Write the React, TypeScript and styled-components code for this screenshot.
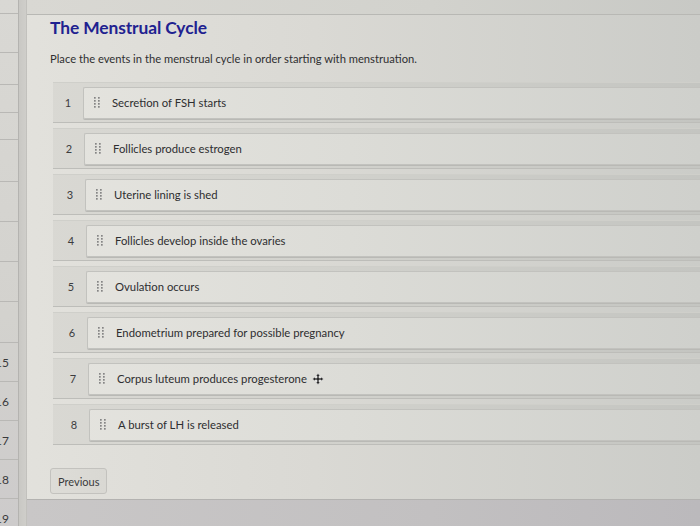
import React from "react";
import styled, { createGlobalStyle } from "styled-components";

const Global = createGlobalStyle`
  html, body { margin: 0; padding: 0; }
  body {
    width: 700px;
    height: 526px;
    overflow: hidden;
    font-family: Lato, "Open Sans", Arial, sans-serif;
    background: #cfcfcb;
  }
`;

const Page = styled.div`
  display: flex;
  width: 700px;
  height: 526px;
  overflow: hidden;
`;

const Sidebar = styled.div`
  width: 18px;
  flex: none;
  display: flex;
  flex-direction: column;
  background: linear-gradient(180deg, #d9d8d4 0%, #d3d2ce 60%, #cdcbcb 100%);
`;

const SideCell = styled.div<{ $h: number }>`
  height: ${(p) => p.$h}px;
  flex: none;
  border-bottom: 1px solid #b9b8b5;
  box-sizing: border-box;
  display: flex;
  justify-content: flex-end;
  align-items: center;
  padding-right: 9px;
  font-size: 12px;
  color: #3a3a3c;
  white-space: nowrap;
`;

const Strip = styled.div`
  width: 7px;
  flex: none;
  background: linear-gradient(90deg, #c9c8c4, #cfceca);
  border-left: 1px solid #b4b3b0;
  border-right: 1px solid #c2c1bd;
`;

const Main = styled.div`
  flex: 1;
  display: flex;
  flex-direction: column;
  min-width: 0;
`;

const TopBar = styled.div`
  height: 14px;
  flex: none;
  background: linear-gradient(90deg, #d9d8d3, #d2d2cd 60%, #c8c9c5);
  border-bottom: 1px solid #b8b8b4;
`;

const Panel = styled.div`
  flex: 1;
  display: flex;
  flex-direction: column;
  padding: 2px 0 0 23px;
  background: linear-gradient(90deg, #e3e2dd 0%, #dad9d4 45%, #cbccc8 100%) fixed;
  border-bottom: 1px solid #b3b2b0;
`;

const BottomBar = styled.div`
  height: 26px;
  flex: none;
  background: linear-gradient(90deg, #c9c7c7, #c2c0c1 60%, #bbb9bc);
`;

const Title = styled.h1`
  margin: 0;
  font-size: 17.4px;
  line-height: 22px;
  font-weight: 700;
  color: #1f2290;
  letter-spacing: -0.1px;
`;

const Prompt = styled.p`
  margin: 13px 0 0 0;
  font-size: 11.2px;
  line-height: 14px;
  color: #2f2f31;
`;

const List = styled.ol`
  list-style: none;
  margin: 16px 0 0 0;
  padding: 0;
  display: flex;
  flex-direction: column;
  gap: 5px;
`;

const Band = styled.li<{ $shift: number }>`
  height: 41px;
  box-sizing: border-box;
  display: flex;
  align-items: center;
  margin-left: 3px;
  padding: 4px 0 4px ${(p) => p.$shift}px;
  background: linear-gradient(90deg, #dad9d4 0%, #d1d1cc 50%, #c4c5c1 100%) fixed;
  border-top: 1px solid #cfcfca;
  border-bottom: 1px solid #bdbdb9;
`;

const Num = styled.span`
  width: 30px;
  flex: none;
  text-align: center;
  font-size: 11px;
  color: #3c3c3e;
`;

const Card = styled.div`
  flex: 1;
  height: 32px;
  display: flex;
  align-items: center;
  gap: 12px;
  padding-left: 10px;
  box-sizing: border-box;
  background: linear-gradient(90deg, #e6e5e0 0%, #dcdcd7 50%, #cfd0cc 100%) fixed;
  border: 1px solid #c2c2be;
  border-right: none;
  border-radius: 2px 0 0 2px;
  box-shadow: 0 1px 0 #b9b9b5;
`;

const Label = styled.span`
  font-size: 11.3px;
  color: #2e2e30;
  white-space: nowrap;
  display: flex;
  align-items: center;
  gap: 5px;
`;

const Button = styled.button`
  align-self: flex-start;
  margin-top: 23px;
  height: 26px;
  padding: 0 7px;
  font-family: inherit;
  font-size: 11px;
  color: #3a3a3c;
  background: linear-gradient(90deg, #dddcd7, #d9d8d3);
  border: 1px solid #c3c2be;
  border-radius: 3px;
`;

const Handle = () => (
  <svg width="6" height="11" viewBox="0 0 6 11" style={{ flex: "none" }}>
    {[0, 1, 2, 3].map((r) =>
      [0, 1].map((c) => (
        <rect key={`${r}-${c}`} x={c * 4} y={r * 3} width="1.7" height="1.7" fill="#858585" />
      ))
    )}
  </svg>
);

const MoveCursor = () => (
  <svg width="12" height="12" viewBox="0 0 12 12">
    <path d="M6 0.5 L8.3 3 H7 V5 H9 V3.7 L11.5 6 L9 8.3 V7 H7 V9 H8.3 L6 11.5 L3.7 9 H5 V7 H3 V8.3 L0.5 6 L3 3.7 V5 H5 V3 H3.7 Z" fill="#2a2a2a" stroke="#eee" strokeWidth="0.6" />
  </svg>
);

const items = [
  "Secretion of FSH starts",
  "Follicles produce estrogen",
  "Uterine lining is shed",
  "Follicles develop inside the ovaries",
  "Ovulation occurs",
  "Endometrium prepared for possible pregnancy",
  "Corpus luteum produces progesterone",
  "A burst of LH is released",
];

const sideCells: { h: number; t: string }[] = [
  { h: 14, t: "" },
  { h: 39, t: "" },
  { h: 32, t: "" },
  { h: 28, t: "" },
  { h: 27, t: "" },
  { h: 42, t: "" },
  { h: 40, t: "" },
  { h: 40, t: "" },
  { h: 40, t: "" },
  { h: 41, t: "" },
  { h: 39, t: "15" },
  { h: 39, t: "16" },
  { h: 39, t: "17" },
  { h: 39, t: "18" },
  { h: 40, t: "19" },
];

export default function App() {
  return (
    <>
      <Global />
      <Page>
        <Sidebar>
          {sideCells.map((c, i) => (
            <SideCell key={i} $h={c.h}>
              {c.t}
            </SideCell>
          ))}
        </Sidebar>
        <Strip />
        <Main>
          <TopBar />
          <Panel>
            <Title>The Menstrual Cycle</Title>
            <Prompt>Place the events in the menstrual cycle in order starting with menstruation.</Prompt>
            <List>
              {items.map((text, i) => (
                <Band key={i} $shift={Math.round(i * 0.85)}>
                  <Num>{i + 1}</Num>
                  <Card>
                    <Handle />
                    <Label>
                      {text}
                      {i === 6 && <MoveCursor />}
                    </Label>
                  </Card>
                </Band>
              ))}
            </List>
            <Button>Previous</Button>
          </Panel>
          <BottomBar />
        </Main>
      </Page>
    </>
  );
}
